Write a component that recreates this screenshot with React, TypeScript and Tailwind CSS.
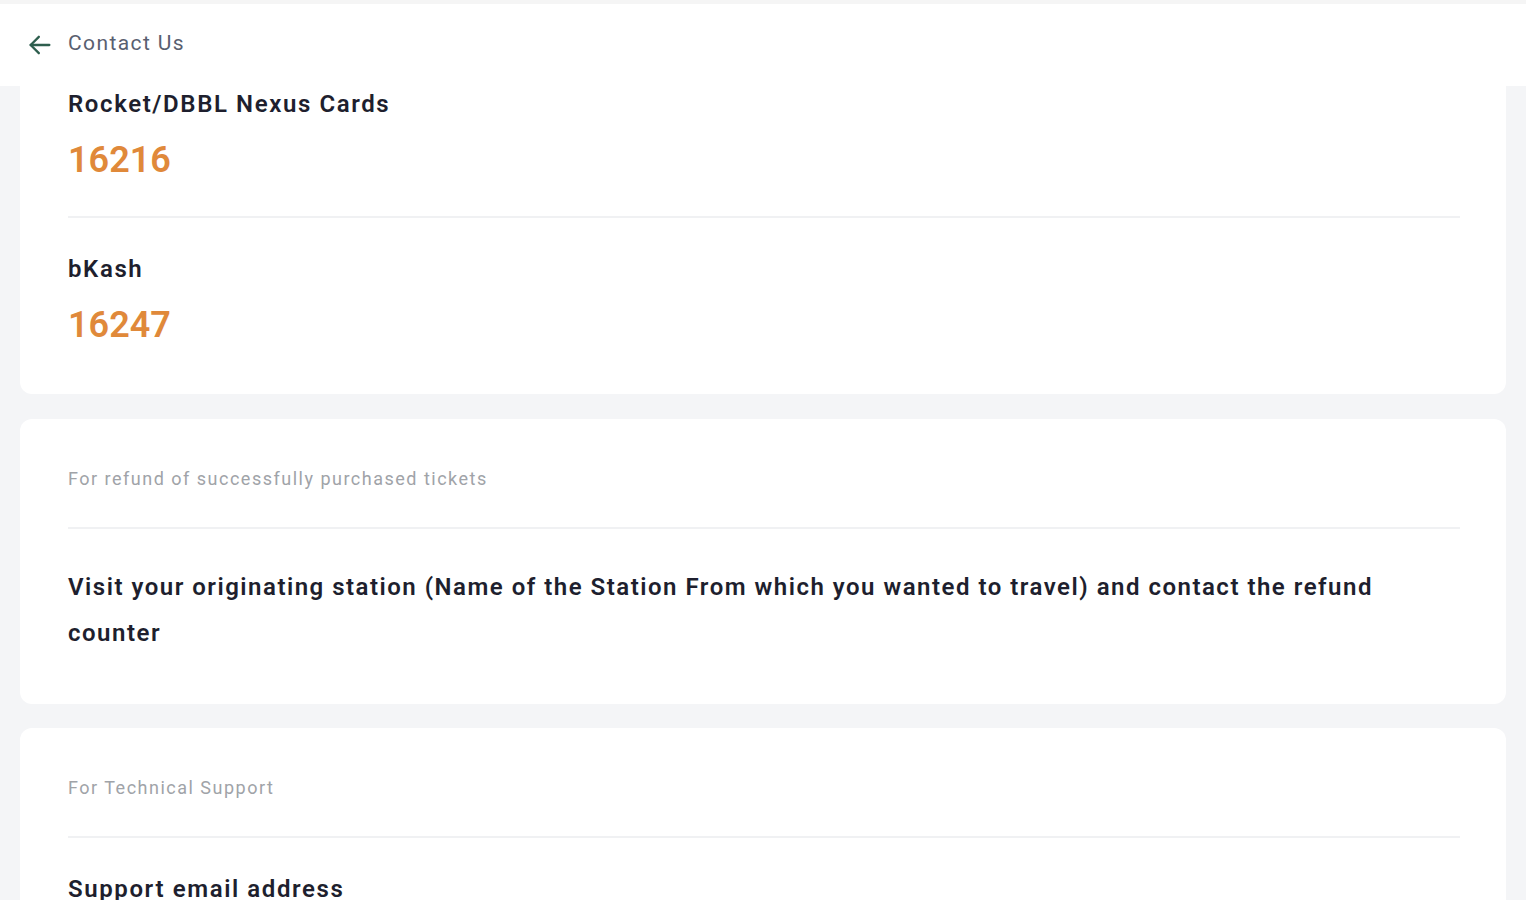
import React from "react";

const font = { fontFamily: "Roboto, 'Noto Sans', 'Liberation Sans', sans-serif" };

function Divider() {
  return <div className="h-[2px] bg-[#f0f1f3]" />;
}

function Entry({ title, num }: { title: string; num: string }) {
  return (
    <div>
      <div className="text-[24px] leading-[32px] font-semibold tracking-[1.6px] text-[#1e1f2e]">{title}</div>
      <div className="mt-[18px] text-[36px] leading-[44px] font-semibold text-[#e0893a]">{num}</div>
    </div>
  );
}

export default function App() {
  return (
    <div className="min-h-[900px] bg-[#f4f5f7] overflow-hidden" style={font}>
      <div className="h-[4px] bg-[#f5f5f5]" />
      <div className="h-[82px] bg-white flex items-center pl-[26px] gap-[14px]">
        <svg width="28" height="28" viewBox="0 0 24 24" fill="none" stroke="#2e5e4e" strokeWidth="2" strokeLinecap="round" strokeLinejoin="round">
          <path d="M20 12H4" />
          <path d="M11 5l-7 7 7 7" />
        </svg>
        <span className="text-[21px] tracking-[1.4px] text-[#596070] mt-[-2px]">Contact Us</span>
      </div>
      <div className="px-[20px] flex flex-col gap-[24px]">
        <div className="bg-white rounded-b-[12px] pl-[48px] pr-[46px] pt-[2px] pb-[47px]">
          <Entry title="Rocket/DBBL Nexus Cards" num="16216" />
          <div className="mt-[34px] mb-[35px]">
            <Divider />
          </div>
          <Entry title="bKash" num="16247" />
        </div>
        <div className="mt-[1px] bg-white rounded-[12px] pl-[48px] pr-[46px] pt-[48px] pb-[48px]">
          <div className="text-[18px] leading-[24px] tracking-[1.5px] text-[#a0a3a8]">For refund of successfully purchased tickets</div>
          <div className="mt-[36px] mb-[35px]">
            <Divider />
          </div>
          <div className="text-[24px] leading-[46px] font-semibold tracking-[1.5px] text-[#1e1f2e]">
            Visit your originating station (Name of the Station From which you wanted to travel) and contact the refund counter
          </div>
        </div>
        <div className="bg-white rounded-[12px] pl-[48px] pr-[46px] pt-[48px] pb-[49px]">
          <div className="text-[18px] leading-[24px] tracking-[1.5px] text-[#a0a3a8]">For Technical Support</div>
          <div className="mt-[36px] mb-[35px]">
            <Divider />
          </div>
          <div className="text-[24px] leading-[32px] font-semibold tracking-[1.6px] text-[#1e1f2e]">Support email address</div>
        </div>
      </div>
    </div>
  );
}
